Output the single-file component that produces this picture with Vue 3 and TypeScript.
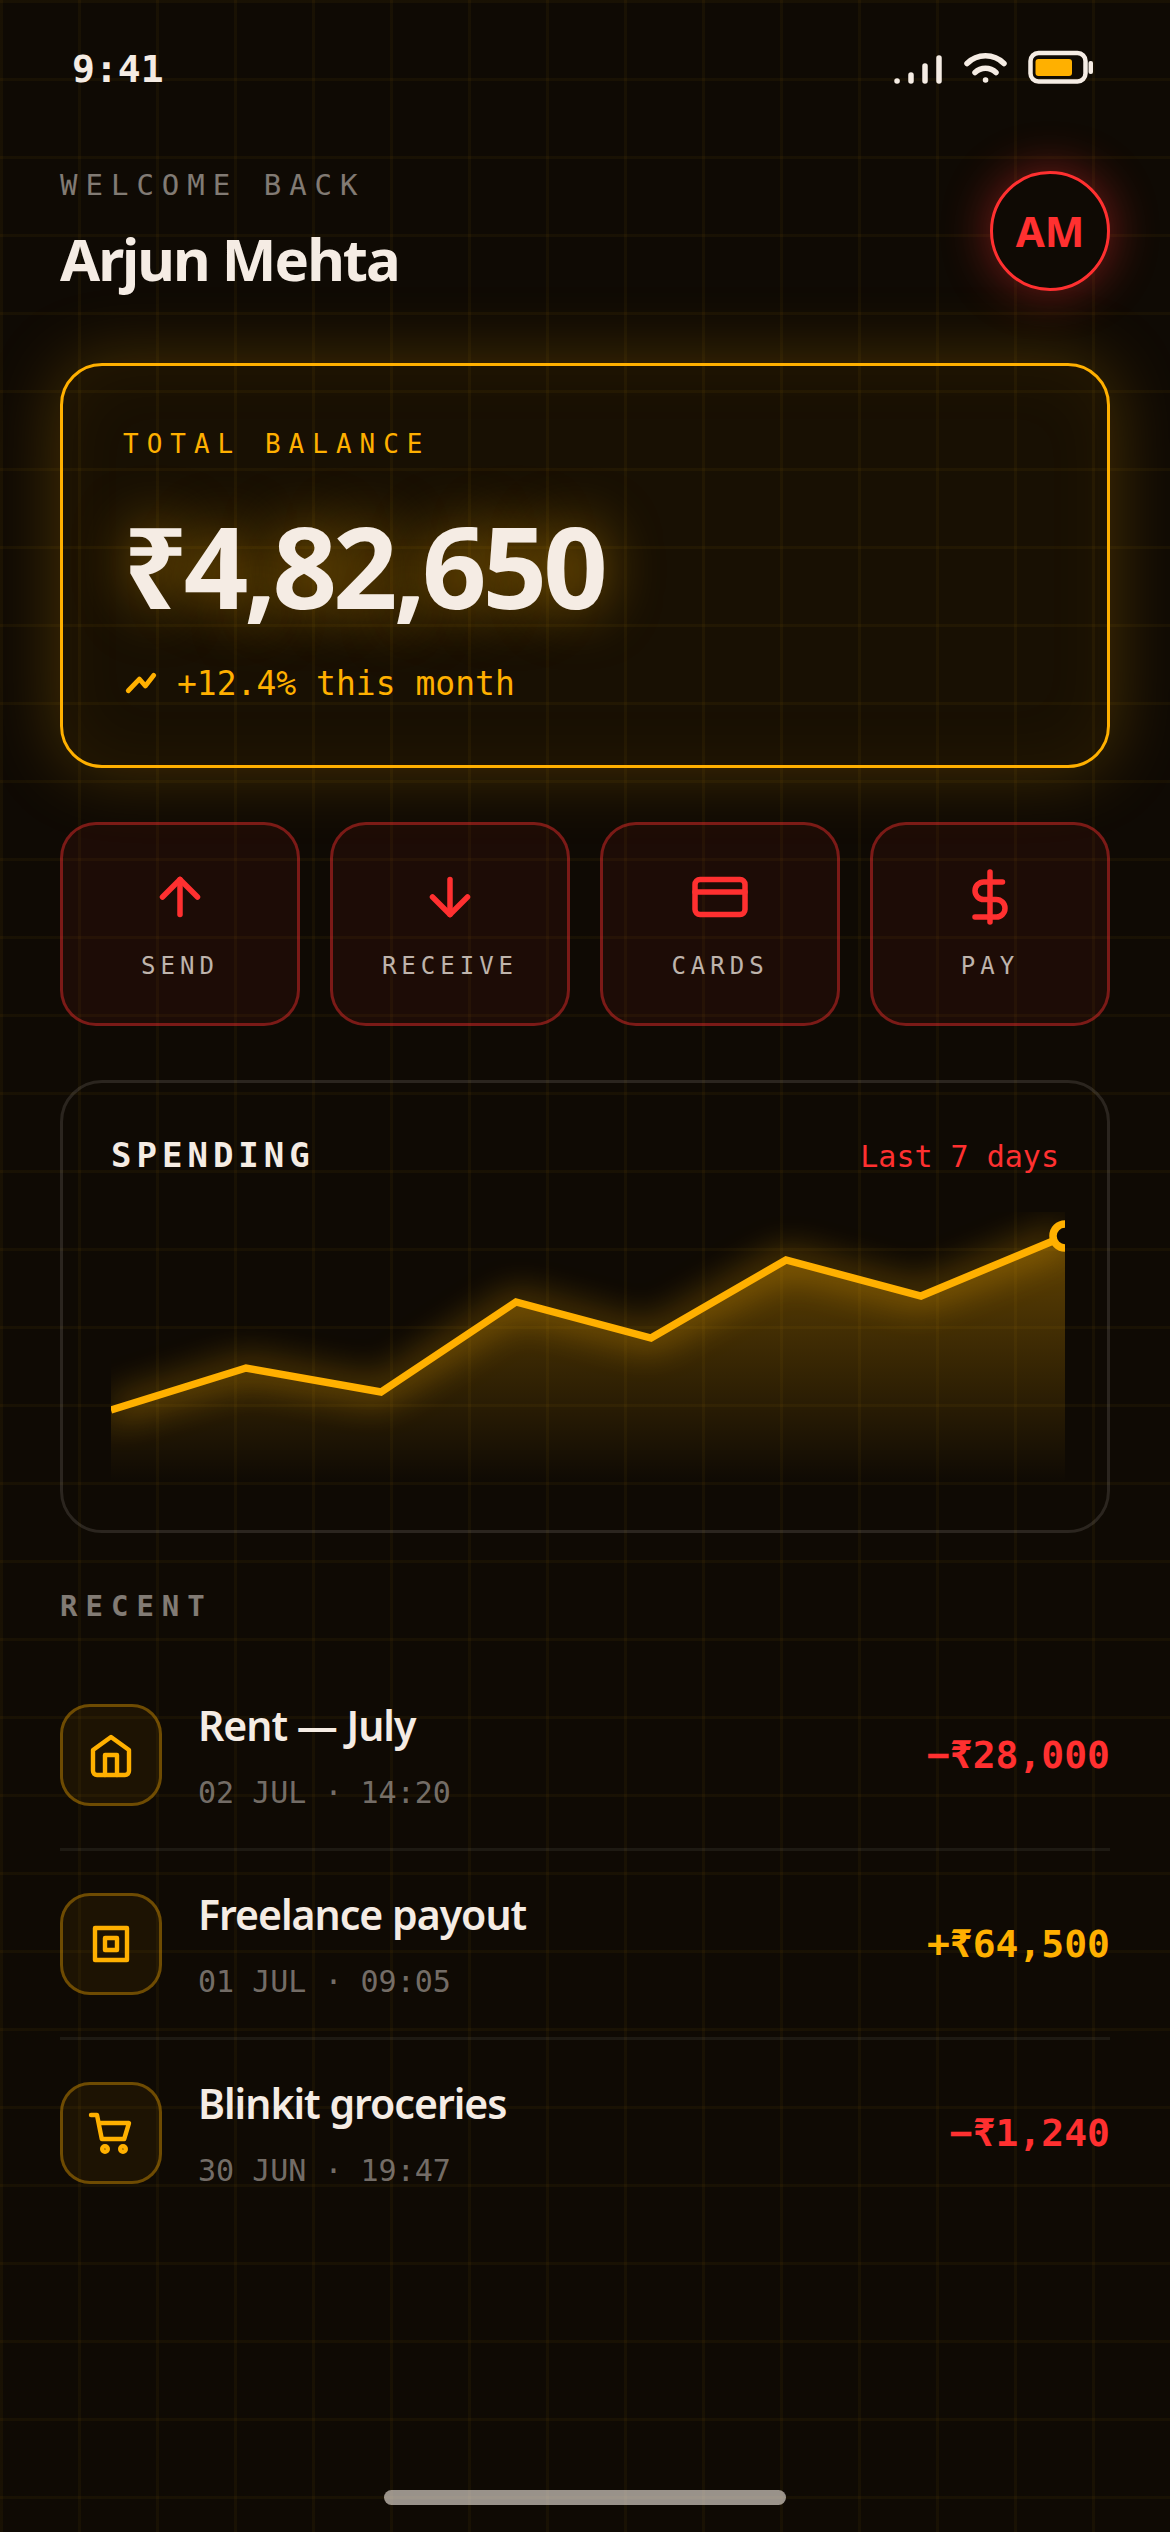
<script setup lang="ts">
import { computed } from 'vue'

interface Action {
  label: string
  paths: string[]
}

interface Transaction {
  title: string
  when: string
  amount: string
  credit: boolean
  paths: string[]
}

const actions: Action[] = [
  { label: 'SEND', paths: ['M12 19V5', 'M5 12l7-7 7 7'] },
  { label: 'RECEIVE', paths: ['M12 5v14', 'M5 12l7 7 7-7'] },
  {
    label: 'CARDS',
    paths: ['M4 5h16a2 2 0 0 1 2 2v10a2 2 0 0 1-2 2H4a2 2 0 0 1-2-2V7a2 2 0 0 1 2-2z', 'M2 10h20'],
  },
  {
    label: 'PAY',
    paths: ['M12 2v20', 'M17 6H9.5a3.5 3.5 0 0 0 0 7h5a3.5 3.5 0 0 1 0 7H6'],
  },
]

const transactions: Transaction[] = [
  {
    title: 'Rent — July',
    when: '02 JUL · 14:20',
    amount: '−₹28,000',
    credit: false,
    paths: ['M3 9.5L12 3l9 6.5V20a2 2 0 0 1-2 2H5a2 2 0 0 1-2-2z', 'M9 22V12h6v10'],
  },
  {
    title: 'Freelance payout',
    when: '01 JUL · 09:05',
    amount: '+₹64,500',
    credit: true,
    paths: ['M4 4h16v16H4z', 'M9 9h6v6H9z'],
  },
  {
    title: 'Blinkit groceries',
    when: '30 JUN · 19:47',
    amount: '−₹1,240',
    credit: false,
    paths: [
      'M2 3h3l2.4 12h11.2L21 7H6',
      'M9 18.6a1.4 1.4 0 1 0 0 2.8 1.4 1.4 0 0 0 0-2.8z',
      'M18 18.6a1.4 1.4 0 1 0 0 2.8 1.4 1.4 0 0 0 0-2.8z',
    ],
  },
]

const points: [number, number][] = [
  [0, 66],
  [45, 52],
  [90, 60],
  [135, 30],
  [180, 42],
  [225, 16],
  [270, 28],
  [318, 8],
]
const line = computed(() => 'M' + points.map((p) => p.join(' ')).join('L'))
const area = computed(() => line.value + 'L318 90L0 90Z')
</script>

<template>
  <div class="screen">
    <header class="status">
      <time>9:41</time>
      <div class="status-icons">
        <svg width="54" height="42" viewBox="0 0 54 42" role="img" aria-label="Signal">
          <path d="M6 33h.1M20 33v-6M34 33V18M48 33V10" />
        </svg>
        <svg width="45" height="42" viewBox="0 0 45 42" role="img" aria-label="Wi-Fi">
          <path d="M4 15.500a26 26 0 0 1 37 0M12 24.500a15 15 0 0 1 21 0M22.500 32h.1" />
        </svg>
        <svg width="72" height="42" viewBox="0 0 72 42" role="img" aria-label="Battery">
          <rect class="shell" x="4.500" y="5" width="55" height="28.500" rx="8" />
          <rect class="charge" x="9.500" y="11" width="36.500" height="17" rx="3" />
          <rect class="nub" x="62.500" y="13" width="4.500" height="13" rx="2" />
        </svg>
      </div>
    </header>

    <main class="content">
      <div class="greeting">
        <div class="who">
          <p class="welcome">WELCOME BACK</p>
          <h1 class="name">Arjun Mehta</h1>
        </div>
        <button class="avatar" type="button">AM</button>
      </div>

      <section class="balance">
        <h2 class="balance-label">TOTAL BALANCE</h2>
        <p class="balance-value">₹4,82,650</p>
        <p class="trend">
          <svg width="36" height="36" viewBox="0 0 24 24" aria-hidden="true">
            <path d="M3.500 16.500l7.400-7.800 4 4.600 5.600-7.100" />
          </svg>
          <span>+12.4% this month</span>
        </p>
      </section>

      <nav class="actions">
        <button v-for="a in actions" :key="a.label" class="action" type="button">
          <svg width="60" height="60" viewBox="0 0 24 24" aria-hidden="true">
            <path v-for="d in a.paths" :key="d" :d="d" />
          </svg>
          <span>{{ a.label }}</span>
        </button>
      </nav>

      <section class="spending">
        <div class="spending-head">
          <h2>SPENDING</h2>
          <span class="range">Last 7 days</span>
        </div>
        <svg class="chart" viewBox="0 0 318 90" role="img" aria-label="Spending, last 7 days">
          <defs>
            <linearGradient id="fill" x1="0" y1="0" x2="0" y2="1">
              <stop offset="0" stop-color="#ffb000" stop-opacity="0.35" />
              <stop offset="1" stop-color="#ffb000" stop-opacity="0" />
            </linearGradient>
          </defs>
          <path :d="area" fill="url(#fill)" />
          <path class="line" :d="line" />
          <circle class="marker" cx="318" cy="8" r="4" />
        </svg>
      </section>

      <section class="recent">
        <h2>RECENT</h2>
        <ul>
          <li v-for="t in transactions" :key="t.title">
            <span class="tile">
              <svg width="48" height="48" viewBox="0 0 24 24" aria-hidden="true">
                <path v-for="d in t.paths" :key="d" :d="d" />
              </svg>
            </span>
            <div class="details">
              <p class="title">{{ t.title }}</p>
              <p class="when">{{ t.when }}</p>
            </div>
            <span class="amount" :class="{ credit: t.credit }">{{ t.amount }}</span>
          </li>
        </ul>
      </section>
    </main>

    <div class="home-bar"></div>
  </div>
</template>

<style>
body {
  background: #0f0a04;
}
</style>

<style scoped>
.screen {
  --amber: #ffb000;
  --red: #ff3030;
  --cream: #f5ece4;
  --mono: Consolas, 'DejaVu Sans Mono', monospace;
  --sans: 'Segoe UI', 'Noto Sans', sans-serif;
  box-sizing: border-box;
  min-height: 100vh;
  display: flex;
  flex-direction: column;
  padding-bottom: 27px;
  color: var(--cream);
  font-family: var(--sans);
  background-color: #0f0a04;
  background-image:
    linear-gradient(rgba(255, 176, 0, 0.045) 3px, transparent 3px),
    linear-gradient(90deg, rgba(255, 176, 0, 0.045) 3px, transparent 3px);
  background-size: 78px 78px;
}

h1,
h2,
p,
ul {
  margin: 0;
  padding: 0;
}

svg {
  display: block;
  flex: none;
  fill: none;
  stroke: currentColor;
  stroke-linecap: round;
  stroke-linejoin: round;
}

button {
  margin: 0;
  box-sizing: border-box;
  cursor: pointer;
}

.status {
  height: 138px;
  padding: 0 72px;
  display: flex;
  align-items: center;
  justify-content: space-between;
}

.status time {
  font: 700 38px/48px var(--mono);
}

.status-icons {
  display: flex;
  gap: 18px;
}

.status-icons svg {
  stroke-width: 5.5;
}

.status-icons .shell {
  stroke-width: 4.5;
}

.status-icons .charge {
  fill: var(--amber);
  stroke: none;
}

.status-icons .nub {
  fill: var(--cream);
  stroke: none;
}

.content {
  padding: 29px 60px 0;
}

.greeting {
  display: flex;
  align-items: center;
  justify-content: space-between;
}

.welcome {
  font: 400 29px/36px var(--mono);
  letter-spacing: 8px;
  color: rgba(245, 236, 228, 0.5);
}

.name {
  margin-top: 20px;
  font-size: 58px;
  line-height: 72px;
  font-weight: 700;
  letter-spacing: -2px;
}

.avatar {
  width: 120px;
  height: 120px;
  padding: 0;
  border: 3px solid var(--red);
  border-radius: 50%;
  background: #0f0a04;
  color: var(--red);
  font: 700 42px/48px var(--sans);
  box-shadow: 0 0 48px rgba(255, 48, 48, 0.45);
}

.balance {
  margin-top: 68px;
  padding: 60px;
  border: 3px solid var(--amber);
  border-radius: 42px;
  background: rgba(255, 176, 0, 0.04);
  box-shadow:
    0 0 72px rgba(255, 176, 0, 0.25),
    inset 0 0 72px rgba(255, 176, 0, 0.06);
}

.balance-label {
  font: 400 26px/36px var(--mono);
  letter-spacing: 8px;
  color: var(--amber);
}

.balance-value {
  margin-top: 42px;
  font-size: 113px;
  line-height: 123px;
  font-weight: 700;
  letter-spacing: -4px;
  text-shadow: 0 0 54px rgba(255, 176, 0, 0.55);
}

.trend {
  margin-top: 36px;
  display: flex;
  align-items: center;
  gap: 18px;
  font: 400 33px/42px var(--mono);
  color: var(--amber);
}

.trend svg {
  stroke-width: 3.2;
}

.actions {
  margin-top: 54px;
  display: grid;
  grid-template-columns: repeat(4, 1fr);
  gap: 30px;
}

.action {
  padding: 42px 0;
  display: flex;
  flex-direction: column;
  align-items: center;
  gap: 24px;
  border: 3px solid rgba(255, 48, 48, 0.42);
  border-radius: 36px;
  background: rgba(255, 48, 48, 0.06);
  color: rgba(245, 236, 228, 0.75);
  font: 400 24px/30px var(--mono);
  letter-spacing: 5px;
}

.action svg {
  color: var(--red);
  stroke-width: 2.2;
}

.spending {
  margin-top: 54px;
  padding: 48px;
  border: 3px solid rgba(245, 236, 228, 0.12);
  border-radius: 42px;
}

.spending-head {
  display: flex;
  align-items: baseline;
  justify-content: space-between;
}

.spending h2 {
  font: 700 34px/48px var(--mono);
  letter-spacing: 5px;
}

.range {
  font: 400 30px/36px var(--mono);
  color: var(--red);
}

.chart {
  width: calc(100% + 6px);
  height: auto;
  margin-top: 33px;
  overflow: hidden;
}

.chart path,
.chart circle {
  stroke: none;
}

.chart .line {
  stroke: var(--amber);
  stroke-width: 2.5;
  stroke-linecap: butt;
  stroke-linejoin: miter;
  filter: drop-shadow(0 0 6px #ffb000);
}

.chart .marker {
  fill: #0f0a04;
  stroke: var(--amber);
  stroke-width: 2.5;
}

.recent {
  margin-top: 54px;
}

.recent h2 {
  font: 700 29px/39px var(--mono);
  letter-spacing: 8px;
  color: rgba(245, 236, 228, 0.5);
}

.recent ul {
  margin-top: 36px;
  list-style: none;
}

.recent li {
  display: flex;
  align-items: center;
  gap: 36px;
  padding: 36px 0;
  border-bottom: 3px solid rgba(245, 236, 228, 0.07);
}

.recent li:last-child {
  border-bottom: 0;
}

.tile {
  flex: none;
  box-sizing: border-box;
  width: 102px;
  height: 102px;
  display: flex;
  align-items: center;
  justify-content: center;
  border: 3px solid rgba(255, 176, 0, 0.36);
  border-radius: 30px;
  background: rgba(255, 176, 0, 0.06);
  color: var(--amber);
}

.tile svg {
  stroke-width: 2.2;
}

.details {
  flex: 1;
}

.title {
  font-size: 41px;
  line-height: 54px;
  font-weight: 600;
  letter-spacing: -1px;
}

.when {
  margin-top: 21px;
  font: 400 30px/39px var(--mono);
  color: rgba(245, 236, 228, 0.45);
}

.amount {
  font: 700 38px/48px var(--mono);
  color: var(--red);
}

.amount.credit {
  color: var(--amber);
}

.home-bar {
  width: 402px;
  height: 15px;
  margin: auto auto 0;
  border-radius: 8px;
  background: rgba(245, 236, 228, 0.6);
}
</style>
